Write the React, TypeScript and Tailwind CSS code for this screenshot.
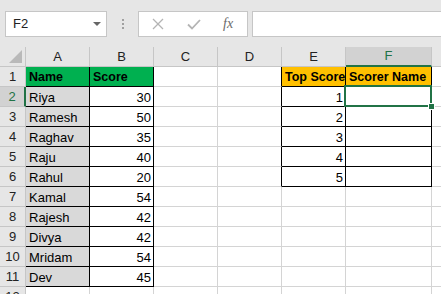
import React from "react";

// ── Sheet data ────────────────────────────────────────────────
const SCORES: [string, number][] = [
  ["Riya", 30],
  ["Ramesh", 50],
  ["Raghav", 35],
  ["Raju", 40],
  ["Rahul", 20],
  ["Kamal", 54],
  ["Rajesh", 42],
  ["Divya", 42],
  ["Mridam", 54],
  ["Dev", 45],
];

const COLS = ["A", "B", "C", "D", "E", "F", "G"];

type CellDef = {
  text?: string;
  right?: boolean;
  bold?: boolean;
  fill?: "green" | "gray" | "orange";
  rb?: boolean; // right border black
  bb?: boolean; // bottom border black
};

const buildRow = (r: number): CellDef[] => {
  const row: CellDef[] = [{}, {}, {}, {}, {}, {}, {}];
  if (r === 1) {
    row[0] = { text: "Name", bold: true, fill: "green", rb: true, bb: true };
    row[1] = { text: "Score", bold: true, fill: "green", rb: true, bb: true };
    row[3] = { rb: true };
    row[4] = { text: "Top Score", bold: true, fill: "orange", rb: true, bb: true };
    row[5] = { text: "Scorer Name", bold: true, fill: "orange", rb: true, bb: true };
  } else if (r <= 11) {
    const [name, score] = SCORES[r - 2];
    row[0] = { text: name, fill: "gray", rb: true, bb: true };
    row[1] = { text: String(score), right: true, rb: true, bb: true };
    if (r <= 6) {
      row[3] = { rb: true };
      row[4] = { text: String(r - 1), right: true, rb: true, bb: true };
      row[5] = { rb: true, bb: true };
    }
  }
  return row;
};

const fillClass = (f?: CellDef["fill"]) =>
  f === "green"
    ? "bg-[#00b050]"
    : f === "gray"
      ? "bg-[#d9d9d9]"
      : f === "orange"
        ? "bg-[#ffc000]"
        : "bg-white";

// ── Toolbar icons ──────────────────────────────────────────────
const CancelIcon = () => (
  <svg width="12" height="12" viewBox="0 0 12 12" fill="none" stroke="#b4b4b4" strokeWidth={1.3}>
    <line x1="1" y1="1" x2="11" y2="11" />
    <line x1="11" y1="1" x2="1" y2="11" />
  </svg>
);
const CheckIcon = () => (
  <svg width="14" height="11" viewBox="0 0 14 11" fill="none" stroke="#b4b4b4" strokeWidth={1.8}>
    <polyline points="1,5.5 5,9.5 13,1" />
  </svg>
);

function Toolbar() {
  return (
    <div className="h-[47px] bg-[#e6e6e6] flex items-start pt-[11px] pl-[5px]">
      {/* Name box */}
      <div className="w-[102px] h-[26px] bg-white border border-[#c6c6c6] flex items-center pl-[7px] pr-[5px] text-[13px] text-[#222]">
        <span className="flex-1">F2</span>
        <svg width="8" height="4" viewBox="0 0 8 4">
          <polygon points="0,0 8,0 4,4" fill="#666" />
        </svg>
      </div>
      {/* Grip dots */}
      <div className="w-[31px] h-[26px] flex flex-col items-center justify-center gap-[2px]">
        <span className="w-[2px] h-[2px] bg-[#a0a0a0]" />
        <span className="w-[2px] h-[2px] bg-[#a0a0a0]" />
        <span className="w-[2px] h-[2px] bg-[#a0a0a0]" />
      </div>
      {/* Cancel / enter / fx */}
      <div className="w-[110px] h-[26px] bg-white border border-[#c6c6c6] flex items-center">
        <span className="ml-[13px]">
          <CancelIcon />
        </span>
        <span className="ml-[23px]">
          <CheckIcon />
        </span>
        <span className="ml-[22px] font-['Liberation_Serif',serif] italic text-[14px] text-[#6a6a6a] leading-none">
          fx
        </span>
      </div>
      {/* Formula input */}
      <div className="flex-1 h-[26px] ml-[4px] bg-white border border-[#c6c6c6] border-r-0" />
    </div>
  );
}

export default function App() {
  const rows = Array.from({ length: 12 }, (_, i) => i + 1);

  return (
    <div className="w-[441px] h-[294px] overflow-hidden bg-white font-['Liberation_Sans',Arial,sans-serif]">
      <Toolbar />

      <div className="relative">
        <div className="grid grid-cols-[26px_64px_64px_64px_64px_64px_86px_64px] auto-rows-[20px]">
          {/* Corner */}
          <div className="bg-[#e6e6e6] border-r border-b border-[#c6c6c6] flex items-end justify-end pr-[3px] pb-[3px]">
            <svg width="13" height="13" viewBox="0 0 13 13">
              <polygon points="13,0 13,13 0,13" fill="#b9b9b9" />
            </svg>
          </div>
          {/* Column headers */}
          {COLS.map((c) =>
            c === "F" ? (
              <div
                key={c}
                className="bg-[#d2d2d2] border-r border-r-[#c6c6c6] border-b-2 border-b-[#217346] flex items-center justify-center text-[13px] text-[#217346]"
              >
                {c}
              </div>
            ) : (
              <div
                key={c}
                className="bg-[#e6e6e6] border-r border-b border-[#c6c6c6] flex items-center justify-center text-[13px] text-[#222]"
              >
                {c}
              </div>
            ),
          )}

          {rows.map((r) => (
            <React.Fragment key={r}>
              {/* Row header */}
              {r === 2 ? (
                <div className="bg-[#d2d2d2] border-b border-b-[#c6c6c6] border-r-2 border-r-[#217346] flex items-center justify-center text-[13px] text-[#217346]">
                  {r}
                </div>
              ) : (
                <div className="bg-[#e6e6e6] border-r border-b border-[#c6c6c6] flex items-center justify-center text-[13px] text-[#222]">
                  {r}
                </div>
              )}
              {buildRow(r).map((cell, ci) => (
                <div
                  key={ci}
                  className={[
                    "border-r border-b flex items-end overflow-hidden whitespace-nowrap text-black leading-[15px] pb-[1px]",
                    fillClass(cell.fill),
                    cell.rb ? "border-r-black" : "border-r-[#d4d4d4]",
                    cell.bb ? "border-b-black" : "border-b-[#d4d4d4]",
                    cell.right ? "justify-end pr-[2px]" : "pl-[3px]",
                    cell.bold ? "font-bold text-[12.5px]" : "text-[13px]",
                  ].join(" ")}
                >
                  {cell.text}
                </div>
              ))}
            </React.Fragment>
          ))}
        </div>

        {/* Active cell F2 selection */}
        <div className="absolute left-[344px] top-[38px] w-[88px] h-[22px] border-2 border-[#217346]" />
        <div className="absolute left-[428px] top-[56px] w-[7px] h-[7px] bg-[#217346] border border-white" />
      </div>
    </div>
  );
}
